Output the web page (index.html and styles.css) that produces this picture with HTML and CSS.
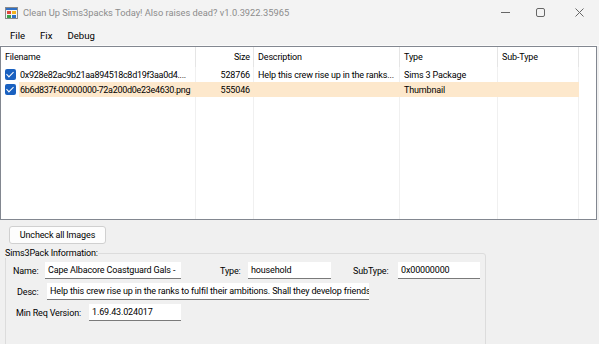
FILE: index.html
```html
<!DOCTYPE html>
<html lang="en">
<head>
  <meta charset="UTF-8">
  <title>Clean Up Sims3packs Today!</title>
  <link rel="stylesheet" href="styles.css">
</head>
<body>
  <div class="window">
    <div class="titlebar">
      <svg class="app-icon" width="13" height="12" viewBox="0 0 13 12">
        <rect x="0.5" y="0.5" width="12" height="11" fill="#f4f4f4" stroke="#8a8a8a"/>
        <rect x="1" y="1" width="11" height="2" fill="#2f6fc4"/>
        <rect x="2" y="4" width="4" height="3" fill="#e0483b"/>
        <rect x="7" y="4" width="4" height="3" fill="#f2b21c"/>
        <rect x="2" y="8" width="4" height="3" fill="#3aa14a"/>
        <rect x="7" y="8" width="4" height="3" fill="#2f6fc4"/>
      </svg>
      <span class="title">Clean Up Sims3packs Today! Also raises dead? v1.0.3922.35965</span>
      <div class="caption-btns">
        <svg class="cb-min" width="9" height="9" viewBox="0 0 9 9"><line x1="0" y1="4.5" x2="9" y2="4.5" stroke="#666" stroke-width="1"/></svg>
        <svg class="cb-max" width="9" height="9" viewBox="0 0 9 9"><rect x="0.5" y="0.5" width="8" height="8" rx="1.5" fill="none" stroke="#666"/></svg>
        <svg class="cb-close" width="9" height="9" viewBox="0 0 9 9"><path d="M0.5 0.5 L8.5 8.5 M8.5 0.5 L0.5 8.5" stroke="#666" fill="none"/></svg>
      </div>
    </div>
    <div class="menubar">
      <span>File</span>
      <span>Fix</span>
      <span>Debug</span>
    </div>
    <div class="listview">
      <div class="row header">
        <div class="c-name">Filename</div>
        <div class="c-size">Size</div>
        <div class="c-desc">Description</div>
        <div class="c-type">Type</div>
        <div class="c-sub">Sub-Type</div>
        <div class="c-rest"></div>
      </div>
      <div class="row">
        <div class="c-name"><span class="check"></span><span class="txt">0x928e82ac9b21aa894518c8d19f3aa0d4....</span></div>
        <div class="c-size">528766</div>
        <div class="c-desc">Help this crew rise up in the ranks...</div>
        <div class="c-type">Sims 3 Package</div>
        <div class="c-sub"></div>
        <div class="c-rest"></div>
      </div>
      <div class="row selected">
        <div class="c-name"><span class="check"></span><span class="txt">6b6d837f-00000000-72a200d0e23e4630.png</span></div>
        <div class="c-size">555046</div>
        <div class="c-desc"></div>
        <div class="c-type">Thumbnail</div>
        <div class="c-sub"></div>
        <div class="c-rest"></div>
      </div>
      <div class="filler">
        <div class="c-name"></div>
        <div class="c-size"></div>
        <div class="c-desc"></div>
        <div class="c-type"></div>
        <div class="c-sub"></div>
        <div class="c-rest"></div>
      </div>
    </div>
    <div class="bottom">
      <button class="btn">Uncheck all Images</button>
      <fieldset class="group">
        <legend>Sims3Pack Information:</legend>
        <div class="line">
          <label class="lbl-name">Name:</label>
          <div class="field f-name">Cape Albacore Coastguard Gals -</div>
          <label class="lbl-type">Type:</label>
          <div class="field f-type">household</div>
          <label class="lbl-sub">SubType:</label>
          <div class="field f-sub">0x00000000</div>
        </div>
        <div class="line">
          <label class="lbl-desc">Desc:</label>
          <div class="field f-desc">Help this crew rise up in the ranks to fulfil their ambitions. Shall they develop friends</div>
        </div>
        <div class="line">
          <label class="lbl-ver">Min Req Version:</label>
          <div class="field f-ver">1.69.43.024017</div>
        </div>
      </fieldset>
    </div>
  </div>
</body>
</html>
```

FILE: styles.css
```css
body {
  margin: 0;
  padding: 0;
  background: #f0f0f0;
  font-family: Roboto, "Noto Sans", Arial, sans-serif;
  font-size: 9px;
  letter-spacing: -0.15px;
  color: #000;
}
.window {
  width: 599px;
  height: 344px;
  overflow: hidden;
  display: flex;
  flex-direction: column;
}
.titlebar {
  height: 25px;
  flex: none;
  background: #f3f3f3;
  display: flex;
  align-items: center;
  padding-left: 5px;
}
.app-icon {
  margin-right: 5px;
}
.title {
  color: #8c8c8c;
  font-size: 9.3px;
  letter-spacing: 0;
}
.caption-btns {
  margin-left: auto;
  display: flex;
  padding-right: 15px;
}
.cb-max { margin-left: 26px; }
.cb-close { margin-left: 30px; }
.menubar {
  height: 20px;
  flex: none;
  background: #f3f3f3;
  display: flex;
  align-items: center;
  gap: 15px;
  padding-left: 10px;
  font-size: 9.6px;
  letter-spacing: 0;
  border-bottom: 1px solid #fbfbfb;
}
.listview {
  flex: none;
  margin-right: 2px;
  height: 172px;
  background: #fff;
  border: 1px solid #828790;
  display: flex;
  flex-direction: column;
}
.row {
  display: flex;
  height: 15px;
  align-items: center;
  flex: none;
}
.row > div {
  height: 100%;
  display: flex;
  align-items: center;
  border-right: 1px solid #f0f0f0;
  box-sizing: border-box;
  white-space: nowrap;
  overflow: hidden;
}
.row.header {
  height: 20px;
}
.row.header > div {
  border-right-color: #e5e5e5;
}
.row.selected > div {
  background: #fde8cc;
  border-right-color: #fde8cc;
}
.row.selected > .c-rest {
  background: #fff;
  border-right: none;
}
.row.selected > .c-name {
  background: linear-gradient(to right, #fff 18px, #fde8cc 18px);
}
.c-name { width: 195px; padding-left: 5px; }
.c-size { width: 58px; justify-content: flex-end; padding-right: 3px; }
.c-desc { width: 146px; padding-left: 4px; }
.c-type { width: 98px; padding-left: 4px; }
.c-sub { width: 81px; padding-left: 4px; }
.c-rest { flex: 1; border-right: none !important; }
.row .c-name { padding-left: 4px; }
.row .c-name .txt { letter-spacing: -0.3px; }
.check {
  width: 11px;
  height: 11px;
  border-radius: 2px;
  background: #1a61c0;
  margin-right: 4px;
  flex: none;
  position: relative;
}
.check::after {
  content: "";
  position: absolute;
  left: 3px;
  top: 1px;
  width: 3px;
  height: 6px;
  border: solid #fff;
  border-width: 0 1.5px 1.5px 0;
  transform: rotate(45deg);
}
.filler {
  flex: 1;
  display: flex;
}
.filler > div {
  box-sizing: border-box;
  border-right: 1px solid #f0f0f0;
}
.filler > .c-rest {
  border-right: none;
}
.bottom {
  flex: 1;
  padding: 6px 0 0 5px;
  display: flex;
  flex-direction: column;
  align-items: flex-start;
}
.btn {
  margin-left: 4px;
  width: 97px;
  height: 18px;
  flex: none;
  font-family: inherit;
  font-size: 9px;
  letter-spacing: -0.15px;
  background: #fdfdfd;
  border: 1px solid #d0d0d0;
  border-radius: 3px;
  padding: 0;
}
.group {
  margin: 4px 0 0 0;
  width: 481px;
  height: 120px;
  flex: none;
  box-sizing: border-box;
  border: 1px solid #dcdcdc;
  border-radius: 3px;
  padding: 2px 0 0 7px;
}
.group legend {
  padding: 0;
  margin-left: -8px;
}
.line {
  display: flex;
  align-items: center;
  height: 21px;
}
label {
  color: #000;
  white-space: nowrap;
}
.field {
  height: 17px;
  background: #fff;
  border-bottom: 1px solid #7a7a7a;
  display: flex;
  align-items: center;
  padding-left: 3px;
  box-sizing: border-box;
  white-space: nowrap;
  overflow: hidden;
}
.lbl-name { width: 32px; }
.f-name { width: 136px; }
.lbl-type { width: 28px; margin-left: 39px; }
.f-type { width: 83px; }
.lbl-sub { width: 45px; margin-left: 22px; }
.f-sub { width: 82px; }
.lbl-desc { width: 30px; margin-left: 4px; }
.f-desc { width: 322px; }
.lbl-ver { width: 73px; margin-left: 3px; }
.f-ver { width: 92px; }
```
